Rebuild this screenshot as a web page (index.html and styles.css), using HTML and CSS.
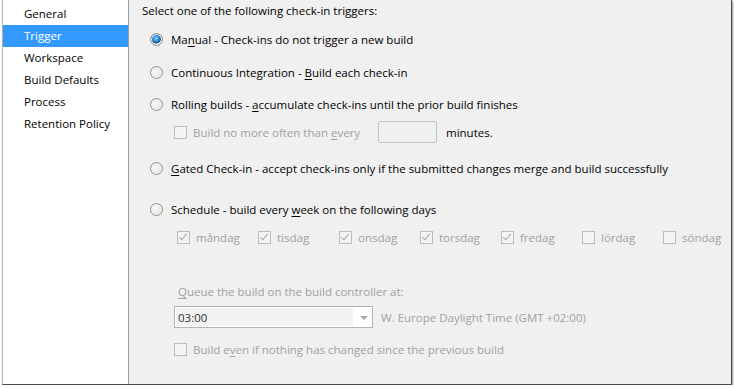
FILE: index.html
```html
<!DOCTYPE html>
<html lang="en">
<head>
    <meta charset="UTF-8">
    <title>Build Definition - Trigger</title>
    <link rel="stylesheet" href="styles.css">
</head>
<body>
    <div class="window">
        <ul class="nav">
            <li>General</li>
            <li class="selected">Trigger</li>
            <li>Workspace</li>
            <li>Build Defaults</li>
            <li>Process</li>
            <li>Retention Policy</li>
        </ul>

        <div class="content">
            <div class="heading">Select one of the following check-in triggers:</div>

            <label class="option opt-manual">
                <span class="radio checked"></span>
                <span>Ma<u>n</u>ual - Check-ins do not trigger a new build</span>
            </label>

            <label class="option opt-ci">
                <span class="radio"></span>
                <span>Continuous Integration - <u>B</u>uild each check-in</span>
            </label>

            <label class="option opt-rolling">
                <span class="radio"></span>
                <span>Rolling builds - <u>a</u>ccumulate check-ins until the prior build finishes</span>
            </label>

            <div class="sub-row rolling-limit">
                <span class="check"></span>
                <span class="disabled every">Build no more often than <u>e</u>very</span>
                <span class="minutes-box"></span>
                <span class="minutes">minutes.</span>
            </div>

            <label class="option opt-gated">
                <span class="radio"></span>
                <span><u>G</u>ated Check-in - accept check-ins only if the submitted changes merge and build successfully</span>
            </label>

            <label class="option opt-schedule">
                <span class="radio"></span>
                <span>Schedule - build every <u>w</u>eek on the following days</span>
            </label>

            <div class="days">
                <div class="day"><span class="check ticked"></span><span>måndag</span></div>
                <div class="day"><span class="check ticked"></span><span>tisdag</span></div>
                <div class="day"><span class="check ticked"></span><span>onsdag</span></div>
                <div class="day"><span class="check ticked"></span><span>torsdag</span></div>
                <div class="day"><span class="check ticked"></span><span>fredag</span></div>
                <div class="day"><span class="check"></span><span>lördag</span></div>
                <div class="day"><span class="check"></span><span>söndag</span></div>
            </div>

            <div class="queue-label disabled"><u>Q</u>ueue the build on the build controller at:</div>

            <div class="queue-row">
                <div class="combo">
                    <span class="combo-value">03:00</span>
                    <span class="combo-arrow"></span>
                </div>
                <span class="disabled">W. Europe Daylight Time (GMT +02:00)</span>
            </div>

            <div class="sub-row build-even">
                <span class="check"></span>
                <span class="disabled">Build e<u>v</u>en if nothing has changed since the previous build</span>
            </div>
        </div>
    </div>
</body>
</html>
```

FILE: styles.css
```css
body {
    margin: 0;
    background: #fff;
    font-family: "Open Sans", "Noto Sans", sans-serif;
    font-size: 11.5px;
    color: #000;
}
.window {
    display: flex;
    margin-left: 2px;
    width: 728px;
    height: 384px;
    border-left: 1px solid #b4b4b4;
    border-right: 1px solid #4a4a4a;
    border-bottom: 1px solid #4a4a4a;
    box-shadow: 1px 1px 2px rgba(0, 0, 0, 0.45);
    background: #f0f0f0;
}
.nav {
    flex: none;
    list-style: none;
    margin: 0;
    padding: 3px 0 0 0;
    width: 125px;
    background: #fff;
    border-right: 1px solid #a0a0a0;
}
.nav li {
    height: 22px;
    line-height: 22px;
    padding-left: 21px;
}
.nav li.selected {
    background: #3399ff;
    color: #fff;
}
.content {
    flex: 1;
    min-width: 0;
    padding-left: 13px;
}
.heading {
    margin-top: 3px;
    line-height: 16px;
}
u {
    text-decoration-thickness: 1px;
    text-underline-offset: 2px;
}
.option {
    display: flex;
    align-items: center;
    height: 16px;
    margin-left: 8px;
    white-space: nowrap;
}
.opt-manual { margin-top: 12px; }
.opt-ci { margin-top: 17px; }
.opt-rolling { margin-top: 16px; }
.opt-gated { margin-top: 17px; }
.opt-schedule { margin-top: 25px; }

.radio {
    flex: none;
    width: 11px;
    height: 11px;
    margin-right: 8px;
    border: 1px solid #8e8f8f;
    border-radius: 50%;
    background: radial-gradient(circle at 40% 40%, #fdfdfd 0, #e6e6e6 60%, #cfcfcf 100%);
    box-shadow: inset 0 0 0 1px #f4f4f4;
}
.radio.checked {
    background:
        radial-gradient(circle at 45% 40%, #8ad4ff 0, #2a8ad4 35%, #0c4b82 55%, transparent 60%),
        radial-gradient(circle at 40% 40%, #fdfdfd 0, #e6e6e6 60%, #cfcfcf 100%);
}

.sub-row {
    display: flex;
    align-items: center;
    margin-left: 32px;
    white-space: nowrap;
}
.rolling-limit {
    height: 22px;
    margin-top: 9px;
}
.check {
    flex: none;
    position: relative;
    box-sizing: border-box;
    width: 13px;
    height: 13px;
    margin-right: 6px;
    border: 1px solid #bcbcbc;
    background: #f4f4f4;
}
.check.ticked::after {
    content: "";
    position: absolute;
    left: 3px;
    top: 0px;
    width: 3px;
    height: 7px;
    border-right: 1px solid #a6a6a6;
    border-bottom: 1px solid #a6a6a6;
    transform: rotate(40deg);
}
.disabled {
    color: #a0a0a0;
}
.every {
    width: 185px;
}
.minutes-box {
    flex: none;
    box-sizing: border-box;
    width: 59px;
    height: 22px;
    border: 1px solid #c4c4c4;
    border-radius: 2px;
    background: #f0f0f0;
}
.minutes {
    margin-left: 9px;
}

.days {
    display: grid;
    grid-template-columns: repeat(7, 81px);
    margin: 12px 0 0 35px;
    height: 16px;
}
.day {
    display: flex;
    align-items: center;
    color: #a0a0a0;
}
.day .check {
    margin-right: 6px;
}

.queue-label {
    margin: 39px 0 0 36px;
    line-height: 16px;
}
.queue-row {
    display: flex;
    align-items: center;
    margin: 6px 0 0 32px;
}
.combo {
    flex: none;
    box-sizing: border-box;
    display: flex;
    align-items: center;
    width: 199px;
    height: 22px;
    margin-right: 8px;
    border: 1px solid #b4b4b4;
    background: #fff;
}
.combo-value {
    flex: 1;
    align-self: stretch;
    line-height: 20px;
    padding-left: 2px;
    margin: 1px 0 1px 1px;
    background: #f2f2f2;
    color: #333;
}
.combo-arrow {
    width: 19px;
    height: 20px;
    position: relative;
}
.combo-arrow::after {
    content: "";
    position: absolute;
    left: 7px;
    top: 9px;
    border-left: 4px solid transparent;
    border-right: 4px solid transparent;
    border-top: 4px solid #a8a8a8;
}
.build-even {
    margin-top: 13px;
    height: 16px;
}
```
